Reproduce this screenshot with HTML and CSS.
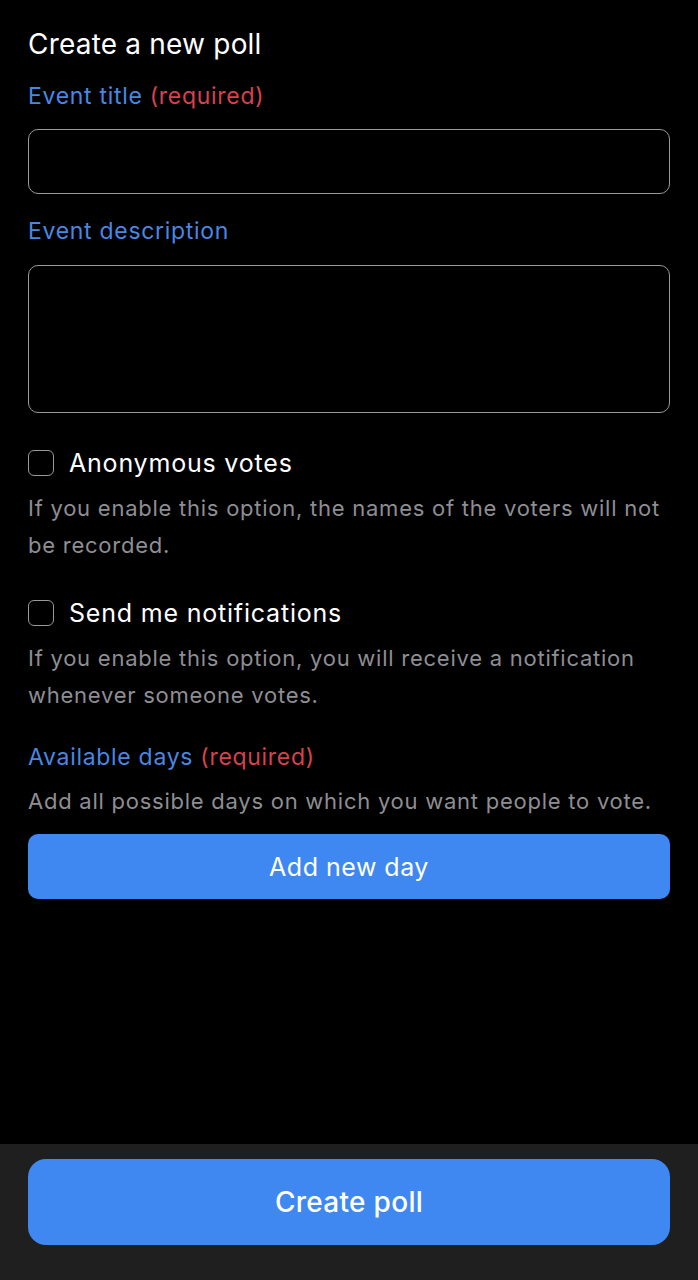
FILE: index.html
```html
<!DOCTYPE html>
<html lang="en">
<head>
    <meta charset="UTF-8">
    <meta name="viewport" content="width=device-width, initial-scale=1.0">
    <title>Create a new poll</title>
    <link rel="stylesheet" href="styles.css">
</head>
<body>
    <div class="page">
        <form class="poll-form">
            <h1 class="form-title">Create a new poll</h1>

            <label class="field-label" for="title">Event title <span class="required">(required)</span></label>
            <input type="text" id="title" class="text-input">

            <label class="field-label" for="description">Event description</label>
            <textarea id="description" class="text-area"></textarea>

            <div class="option">
                <label class="check-row">
                    <span class="check-box"></span>
                    <span class="check-text">Anonymous votes</span>
                </label>
                <p class="hint">If you enable this option, the names of the voters will not be recorded.</p>
            </div>

            <div class="option">
                <label class="check-row">
                    <span class="check-box"></span>
                    <span class="check-text">Send me notifications</span>
                </label>
                <p class="hint">If you enable this option, you will receive a notification whenever someone votes.</p>
            </div>

            <div class="days">
                <div class="field-label">Available days <span class="required">(required)</span></div>
                <p class="hint">Add all possible days on which you want people to vote.</p>
                <button type="button" class="add-day">Add new day</button>
            </div>
        </form>

        <div class="footer">
            <button type="button" class="create-poll">Create poll</button>
        </div>
    </div>
</body>
</html>
```

FILE: styles.css
```css
body {
    margin: 0;
    background-color: #000000;
    font-family: Inter, "Liberation Sans", sans-serif;
    color: #ffffff;
}

.page {
    display: flex;
    flex-direction: column;
    height: 1280px;
}

.poll-form {
    flex: 1;
    display: flex;
    flex-direction: column;
    padding: 26px 28px 0 28px;
}

.form-title {
    margin: 0 0 14px 0;
    font-size: 28px;
    font-weight: 400;
    line-height: 36px;
    letter-spacing: 0.2px;
}

.field-label {
    display: block;
    font-size: 23px;
    line-height: 32px;
    letter-spacing: 0.7px;
    color: #4a87e2;
    margin-top: 4px;
}

.required {
    color: #d8414e;
}

.text-input,
.text-area {
    display: block;
    box-sizing: border-box;
    width: 100%;
    background-color: #000000;
    border: 1.5px solid #98989d;
    border-radius: 10px;
    margin: 0;
    outline: none;
    font: inherit;
    color: #ffffff;
}

.text-input {
    height: 65px;
    margin-top: 17px;
    margin-bottom: 17px;
}

.text-area {
    height: 148px;
    margin-top: 18px;
    resize: none;
}

.option {
    margin-top: 34px;
}

.option + .option {
    margin-top: 33px;
}

.check-row {
    display: flex;
    align-items: center;
    gap: 15px;
}

.check-box {
    width: 24px;
    height: 24px;
    border: 1.5px solid #98989d;
    border-radius: 6px;
}

.check-text {
    font-size: 25px;
    line-height: 32px;
    letter-spacing: 0.8px;
}

.hint {
    margin: 11px 0 0 0;
    font-size: 22px;
    line-height: 37px;
    letter-spacing: 0.75px;
    color: #8e8e93;
}

.days {
    margin-top: 23px;
}

.days .hint {
    margin-top: 10px;
}

.add-day {
    display: block;
    width: 100%;
    height: 65px;
    margin-top: 14px;
    border: none;
    border-radius: 10px;
    background-color: #3f88f2;
    color: #ffffff;
    font-family: inherit;
    font-size: 25px;
    letter-spacing: 0.5px;
    cursor: pointer;
}

.footer {
    background-color: #1f1f1f;
    padding: 15px 28px 35px 28px;
}

.create-poll {
    display: block;
    width: 100%;
    height: 86px;
    border: none;
    border-radius: 18px;
    background-color: #3f88f2;
    color: #ffffff;
    font-family: inherit;
    font-size: 28px;
    font-weight: 500;
    letter-spacing: 0.3px;
    cursor: pointer;
}
```
